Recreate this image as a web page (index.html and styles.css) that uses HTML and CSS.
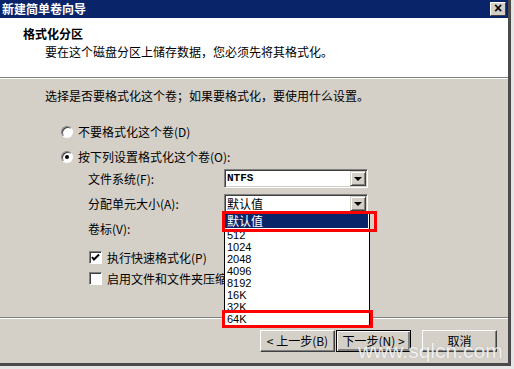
FILE: index.html
```html
<!DOCTYPE html>
<html lang="zh-CN">

<head>
    <meta charset="UTF-8">
    <title>新建简单卷向导</title>
    <link rel="stylesheet" href="styles.css">
</head>

<body>
    <div class="window">
        <div class="titlebar">
            <span class="title">新建简单卷向导</span>
            <span class="close">×</span>
        </div>

        <div class="header">
            <div class="header-title">格式化分区</div>
            <div class="header-sub">要在这个磁盘分区上储存数据，您必须先将其格式化。</div>
        </div>

        <div class="content">
            <p class="intro">选择是否要格式化这个卷；如果要格式化，要使用什么设置。</p>

            <div class="options">
                <div class="option"><span class="radio"></span>不要格式化这个卷(D)</div>
                <div class="option"><span class="radio checked"></span>按下列设置格式化这个卷(O):</div>
            </div>

            <div class="fields">
                <label>文件系统(F):</label>
                <div class="combo"><span class="combo-text mono">NTFS</span><span class="drop"></span></div>
                <label>分配单元大小(A):</label>
                <div class="combo"><span class="combo-text">默认值</span><span class="drop"></span></div>
                <label>卷标(V):</label>
                <div></div>
            </div>

            <div class="checks">
                <div class="check-row">
                    <span class="checkbox">
                        <svg width="9" height="9" viewBox="0 0 9 9"><polyline points="1,4 3,6.5 8,1.5" fill="none" stroke="#000" stroke-width="2"/></svg>
                    </span>执行快速格式化(P)
                </div>
                <div class="check-row"><span class="checkbox"></span>启用文件和文件夹压缩</div>
            </div>
        </div>

        <div class="footer">
            <button class="btn">&lt; 上一步(B)</button>
            <button class="btn default">下一步(N) &gt;</button>
            <button class="btn cancel">取消</button>
        </div>

        <!-- open dropdown of the allocation unit combo -->
        <ul class="droplist">
            <li class="selected">默认值</li>
            <li>512</li>
            <li>1024</li>
            <li>2048</li>
            <li>4096</li>
            <li>8192</li>
            <li>16K</li>
            <li>32K</li>
            <li>64K</li>
        </ul>

        <div class="mark mark-top"></div>
        <div class="mark mark-bottom"></div>

        <div class="watermark">www.sqlcn.com</div>
    </div>
</body>

</html>
```

FILE: styles.css
```css
* {
    margin: 0;
    padding: 0;
    box-sizing: border-box;
}
html,
body {
    background: #e6e6e6;
    font-family: "Noto Sans CJK SC", "Liberation Sans", sans-serif;
    font-size: 12px;
    color: #000;
}
.window {
    position: relative;
    width: 511px;
    height: 366px;
    background: #d4d0c8;
    border-right: 3px solid #4a4a4a;
    border-bottom: 3px solid #4a4a4a;
    overflow: hidden;
}

/* title bar */
.titlebar {
    height: 18px;
    background: #0a246a;
    display: flex;
    justify-content: space-between;
    align-items: center;
    padding: 0 2px 0 2px;
}
.title {
    color: #fff;
    font-weight: bold;
    font-size: 12px;
    line-height: 18px;
}
.close {
    width: 16px;
    height: 14px;
    background: #d4d0c8;
    border: 1px solid;
    border-color: #fff #404040 #404040 #fff;
    font-family: "Liberation Sans", sans-serif;
    font-weight: bold;
    font-size: 14px;
    line-height: 11px;
    text-align: center;
}

/* header */
.header {
    height: 60px;
    background: #fff;
    border-bottom: 1px solid #808080;
    padding: 9px 0 0 23px;
}
.header-title {
    font-weight: bold;
    line-height: 14px;
}
.header-sub {
    margin: 4px 0 0 22px;
    line-height: 14px;
}

/* body */
.content {
    height: 240px;
    border-top: 1px solid #fff;
    border-bottom: 1px solid #808080;
    padding: 10px 0 0 45px;
}
.intro { line-height: 14px; }

.options {
    margin: 16px 0 0 16px;
}
.option {
    height: 25px;
    display: flex;
    align-items: center;
}
.radio {
    width: 12px;
    height: 12px;
    border-radius: 50%;
    background: #fff;
    border: 1px solid;
    border-color: #808080 #fff #fff #808080;
    box-shadow: inset 1px 1px 0 #404040;
    margin-right: 5px;
    display: flex;
    align-items: center;
    justify-content: center;
}
.radio.checked::after {
    content: "";
    width: 4px;
    height: 4px;
    border-radius: 50%;
    background: #000;
}

.fields {
    margin-left: 43px;
    display: grid;
    grid-template-columns: 136px 144px;
    grid-auto-rows: 25px;
}
.fields label { line-height: 19px; }
.combo {
    height: 19px;
    background: #fff;
    border: 1px solid;
    border-color: #808080 #fff #fff #808080;
    box-shadow: inset 1px 1px 0 #404040, inset -1px -1px 0 #d4d0c8;
    display: flex;
    justify-content: space-between;
    align-items: center;
    padding: 0 1px 0 2px;
}
.combo-text { line-height: 15px; }
.mono {
    font-family: "Liberation Mono", monospace;
    font-weight: bold;
    font-size: 11px;
}
.drop {
    width: 16px;
    height: 15px;
    background: #d4d0c8;
    border: 1px solid;
    border-color: #d4d0c8 #404040 #404040 #d4d0c8;
    box-shadow: inset 1px 1px 0 #fff, inset -1px -1px 0 #808080;
    display: flex;
    align-items: center;
    justify-content: center;
}
.drop::after {
    content: "";
    border-left: 4px solid transparent;
    border-right: 4px solid transparent;
    border-top: 4px solid #000;
}

.checks {
    margin: 3px 0 0 44px;
}
.check-row {
    height: 21px;
    display: flex;
    align-items: center;
}
.checkbox {
    width: 13px;
    height: 13px;
    background: #fff;
    border: 1px solid;
    border-color: #808080 #fff #fff #808080;
    box-shadow: inset 1px 1px 0 #404040;
    margin-right: 5px;
    display: flex;
    align-items: center;
    justify-content: center;
}

/* buttons */
.footer {
    border-top: 1px solid #fff;
    display: flex;
    justify-content: flex-end;
    padding: 11px 11px 0 0;
}
.btn {
    width: 75px;
    height: 22px;
    background: #d4d0c8;
    border: 1px solid;
    border-color: #fff #404040 #404040 #fff;
    box-shadow: inset -1px -1px 0 #808080;
    font-family: "Noto Sans CJK SC", sans-serif;
    font-size: 12px;
    line-height: 14px;
    margin-left: 1px;
}
.btn.default {
    border: 1px solid #000;
    box-shadow: inset 1px 1px 0 #fff, inset -2px -2px 0 #808080;
}
.btn.cancel { margin-left: 11px; }

/* open list */
.droplist {
    position: absolute;
    left: 224px;
    top: 212px;
    width: 146px;
    height: 115px;
    list-style: none;
    background: #fff;
    border: 1px solid #000;
    font-family: "Liberation Sans", sans-serif;
    font-size: 11px;
}
.droplist li {
    height: 12px;
    line-height: 12px;
    padding-left: 2px;
}
.droplist li.selected {
    height: 16px;
    line-height: 14px;
    margin: 0 1px 0 0;
    border-top: 1px solid #fff;
    border-bottom: 1px solid #fff;
    background: #0a246a;
    color: #fff;
    font-family: "Noto Sans CJK SC", sans-serif;
    font-size: 12px;
}

/* red highlight boxes */
.mark {
    position: absolute;
    border: 3px solid #f00;
}
.mark-top {
    left: 222px;
    top: 211px;
    width: 155px;
    height: 21px;
}
.mark-bottom {
    left: 222px;
    top: 310px;
    width: 151px;
    height: 18px;
}

.watermark {
    position: absolute;
    left: 358px;
    top: 344px;
    font-family: "Liberation Sans", sans-serif;
    font-size: 21px;
    line-height: 14px;
    color: rgba(255, 255, 255, 0.85);
    text-shadow: 0 0 1px rgba(120, 120, 120, 0.5);
}
```
